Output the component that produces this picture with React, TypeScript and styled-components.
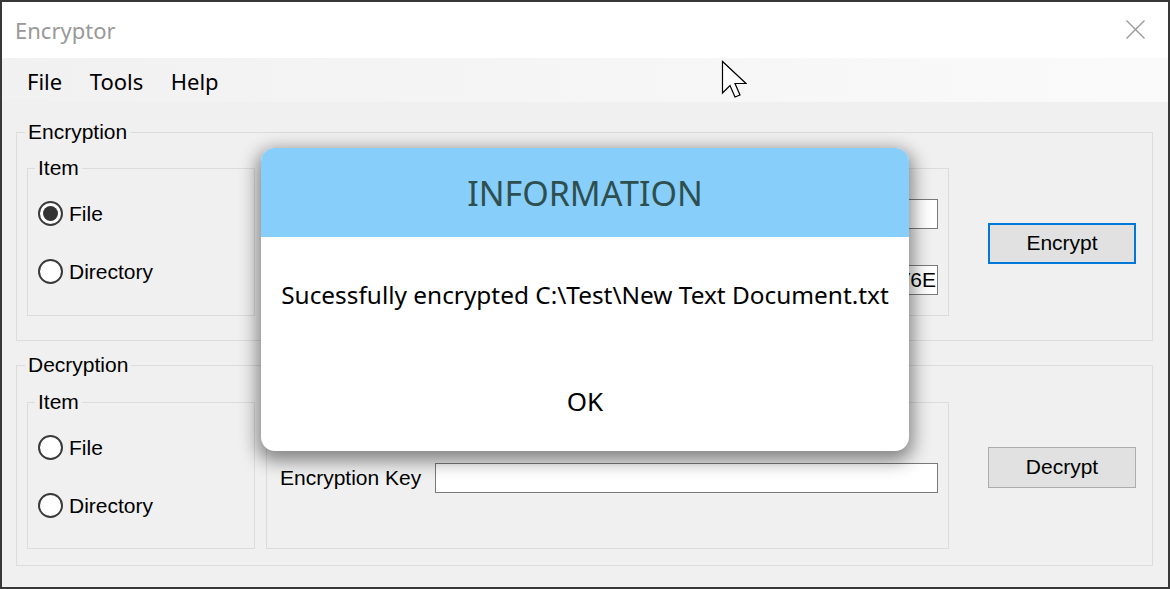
import styled, { createGlobalStyle } from "styled-components";

const GlobalStyle = createGlobalStyle`
  html, body {
    margin: 0;
    padding: 0;
    background: #2b2b2b;
  }
  * {
    box-sizing: border-box;
  }
`;

const Window = styled.div`
  position: relative;
  width: 1170px;
  height: 589px;
  border: 2px solid #383838;
  background: #f0f0f0;
  display: flex;
  flex-direction: column;
  overflow: hidden;
`;

const TitleBar = styled.div`
  height: 56px;
  background: #ffffff;
  display: flex;
  align-items: center;
  justify-content: space-between;
  padding: 0 23px 0 13px;
`;

const Title = styled.span`
  font-family: "Noto Sans", sans-serif;
  font-size: 22px;
  color: #999999;
`;

const CloseButton = styled.svg`
  width: 19px;
  height: 19px;
  margin-top: -2px;
`;

const MenuBar = styled.div`
  height: 44px;
  display: flex;
  align-items: center;
  gap: 27.5px;
  padding: 2px 0 0 25px;
  background: linear-gradient(to right, #f1f1f1, #fafafa);
`;

const MenuItem = styled.span`
  font-family: "Noto Sans", sans-serif;
  font-size: 22px;
  color: #000;
`;

const Body = styled.div`
  flex: 1;
  display: flex;
  flex-direction: column;
  gap: 12px;
  padding: 18px 15px 0 14px;
`;

const Group = styled.fieldset<{ $padTop: number; $padBottom: number }>`
  margin: 0;
  min-width: 0;
  border: 1px solid #dcdcdc;
  padding: ${(p) => p.$padTop}px 16px ${(p) => p.$padBottom}px 10px;
  display: flex;
  align-items: flex-start;
`;

const Legend = styled.legend<{ $indent: number }>`
  margin-left: ${(p) => p.$indent}px;
  padding: 0 3px;
  font-family: "Liberation Sans", Arial, sans-serif;
  font-size: 21px;
  line-height: 24px;
  color: #000;
`;

const ItemBox = styled.fieldset<{ $height: number }>`
  margin: 0;
  min-width: 0;
  width: 228px;
  height: ${(p) => p.$height}px;
  border: 1px solid #dcdcdc;
  padding: 21px 0 0 10px;
  display: flex;
  flex-direction: column;
  gap: 33px;
`;

const FieldsBox = styled.div<{ $height: number; $padTop: number }>`
  margin: 12px 0 0 11px;
  width: 683px;
  height: ${(p) => p.$height}px;
  border: 1px solid #dcdcdc;
  padding: ${(p) => p.$padTop}px 10px 0 13px;
  display: flex;
  flex-direction: column;
  gap: 36px;
`;

const RadioRow = styled.label`
  display: flex;
  align-items: center;
  gap: 6px;
  height: 25px;
  font-family: "Liberation Sans", Arial, sans-serif;
  font-size: 21px;
  color: #000;
`;

const RadioCircle = styled.span<{ $checked?: boolean }>`
  width: 25px;
  height: 25px;
  border-radius: 50%;
  border: 2px solid #3a3a3a;
  background: #fff;
  display: flex;
  align-items: center;
  justify-content: center;

  &::after {
    content: "";
    width: 15px;
    height: 15px;
    border-radius: 50%;
    background: #333;
    display: ${(p) => (p.$checked ? "block" : "none")};
  }
`;

const FieldRow = styled.div`
  display: flex;
  align-items: center;
  height: 30px;
`;

const FieldLabel = styled.span`
  width: 155px;
  font-family: "Liberation Sans", Arial, sans-serif;
  font-size: 21px;
  color: #000;
`;

const TextField = styled.div`
  flex: 1;
  height: 30px;
  background: #fff;
  border: 1px solid #7a7a7a;
  display: flex;
  align-items: center;
  justify-content: flex-end;
  overflow: hidden;
  white-space: nowrap;
  padding-right: 1px;
  font-family: "Liberation Sans", Arial, sans-serif;
  font-size: 21px;
  color: #000;
`;

const ActionButton = styled.button<{ $focused?: boolean; $top: number }>`
  margin: ${(p) => p.$top}px 0 0 39px;
  width: 148px;
  height: 41px;
  flex-shrink: 0;
  background: #e1e1e1;
  border: ${(p) => (p.$focused ? "2px solid #0078d7" : "1px solid #adadad")};
  font-family: "Liberation Sans", Arial, sans-serif;
  font-size: 21px;
  line-height: 24px;
  color: #000;
  padding: 0 0 2px;
`;

const Dialog = styled.div`
  position: absolute;
  left: 259px;
  top: 146px;
  width: 648px;
  height: 303px;
  border-radius: 14px;
  overflow: hidden;
  background: #fff;
  box-shadow: 0 6px 18px 4px rgba(0, 0, 0, 0.45);
  display: flex;
  flex-direction: column;
`;

const DialogHeader = styled.div`
  height: 89px;
  background: #87cefa;
  display: flex;
  align-items: center;
  justify-content: center;
  font-family: "Noto Sans", sans-serif;
  font-size: 34px;
  color: #2f4f4f;
`;

const DialogBody = styled.div`
  flex: 1;
  display: flex;
  flex-direction: column;
  align-items: center;
  padding-top: 42px;
  gap: 72px;
  font-family: "Noto Sans", sans-serif;
  color: #000;
`;

const Message = styled.div`
  font-size: 24.4px;
  line-height: 32px;
  white-space: nowrap;
`;

const OkButton = styled.div`
  font-size: 26px;
  line-height: 36px;
`;

const Cursor = styled.svg`
  position: absolute;
  left: 717px;
  top: 56px;
  width: 28px;
  height: 40px;
`;

type Choice = { label: string; checked?: boolean };

const ItemChoice = ({ height, choices }: { height: number; choices: Choice[] }) => (
  <ItemBox $height={height}>
    <Legend $indent={-3}>Item</Legend>
    {choices.map((c) => (
      <RadioRow key={c.label}>
        <RadioCircle $checked={c.checked} />
        {c.label}
      </RadioRow>
    ))}
  </ItemBox>
);

export default function App() {
  return (
    <>
      <GlobalStyle />
      <Window>
        <TitleBar>
          <Title>Encryptor</Title>
          <CloseButton viewBox="0 0 19 19">
            <path d="M0.5 0.5 L18.5 18.5 M18.5 0.5 L0.5 18.5" stroke="#999" strokeWidth="1.4" fill="none" />
          </CloseButton>
        </TitleBar>
        <MenuBar>
          <MenuItem>File</MenuItem>
          <MenuItem>Tools</MenuItem>
          <MenuItem>Help</MenuItem>
        </MenuBar>
        <Body>
          <Group $padTop={12} $padBottom={24}>
            <Legend $indent={-2}>Encryption</Legend>
            <ItemChoice
              height={160}
              choices={[{ label: "File", checked: true }, { label: "Directory" }]}
            />
            {/* labels of this box sit behind the dialog */}
            <FieldsBox $height={148} $padTop={30}>
              <FieldRow>
                <FieldLabel />
                <TextField />
              </FieldRow>
              <FieldRow>
                <FieldLabel />
                <TextField>V6E</TextField>
              </FieldRow>
            </FieldsBox>
            <ActionButton $focused $top={67}>
              Encrypt
            </ActionButton>
          </Group>
          <Group $padTop={13} $padBottom={16}>
            <Legend $indent={-2}>Decryption</Legend>
            <ItemChoice height={159} choices={[{ label: "File" }, { label: "Directory" }]} />
            <FieldsBox $height={147} $padTop={60}>
              <FieldRow>
                <FieldLabel>Encryption Key</FieldLabel>
                <TextField />
              </FieldRow>
            </FieldsBox>
            <ActionButton $top={57}>Decrypt</ActionButton>
          </Group>
        </Body>

        <Dialog>
          <DialogHeader>INFORMATION</DialogHeader>
          <DialogBody>
            <Message>Sucessfully encrypted C:\Test\New Text Document.txt</Message>
            <OkButton>OK</OkButton>
          </DialogBody>
        </Dialog>

        <Cursor viewBox="0 0 28 40">
          <path
            d="M3.5 3.5 L3.5 35 L11 27.5 L16 39 L21 37 L16 25.5 L27 25.5 Z"
            fill="#fff"
            stroke="#000"
            strokeWidth="1.2"
            strokeLinejoin="miter"
          />
        </Cursor>
      </Window>
    </>
  );
}
